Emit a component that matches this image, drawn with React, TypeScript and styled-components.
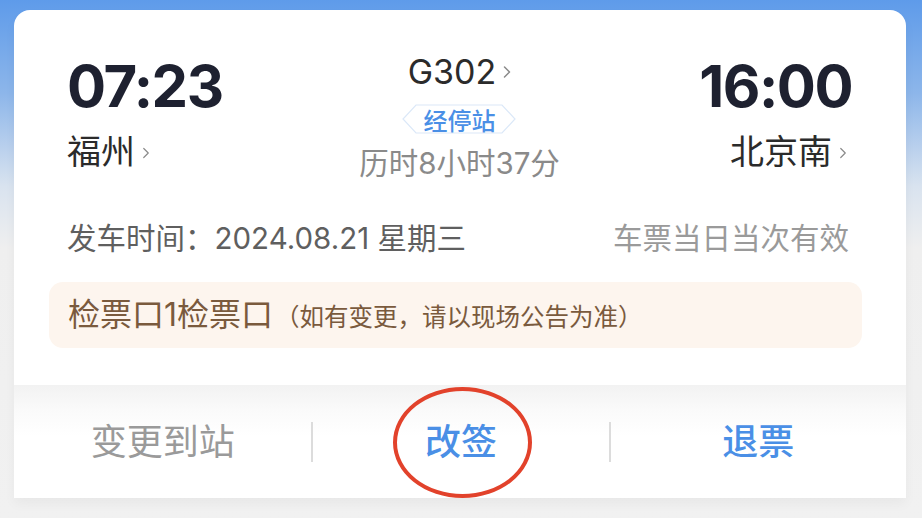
import React from 'react';
import styled, { createGlobalStyle } from 'styled-components';
import { ChevronRight } from 'lucide-react';

const GlobalStyle = createGlobalStyle`
  html, body {
    margin: 0;
    padding: 0;
  }
  body {
    font-family: Inter, "Noto Sans CJK SC", sans-serif;
    background: #f0f0f0;
  }
`;

const Page = styled.div`
  width: 922px;
  height: 518px;
  overflow: hidden;
  background: linear-gradient(180deg, #5e9bea 0%, #8db6ea 18%, #d9e3ef 36%, #efefef 48%, #f1f1f1 100%);
  padding: 10px 16px 0 14px;
  box-sizing: border-box;
`;

const Card = styled.div`
  background: #fff;
  border-radius: 16px 16px 0 0;
  overflow: hidden;
  box-shadow: 0 6px 12px rgba(0, 0, 0, 0.04);
`;

const Body = styled.div`
  padding: 44px 54px 39px 53px;
`;

const TopRow = styled.div`
  display: grid;
  grid-template-columns: 1fr auto 1fr;
  align-items: start;
`;

const End = styled.div<{ $right?: boolean }>`
  display: flex;
  flex-direction: column;
  align-items: ${(p) => (p.$right ? 'flex-end' : 'flex-start')};
`;

const Time = styled.div`
  font-size: 58px;
  font-weight: 700;
  line-height: 64px;
  color: #1e2130;
  letter-spacing: -1.5px;
`;

const Station = styled.div`
  display: flex;
  align-items: center;
  margin-top: 14px;
  font-size: 34px;
  line-height: 40px;
  color: #2b2b2b;
  svg {
    color: #8a8a8a;
    margin-left: 2px;
    margin-top: 2px;
  }
`;

const Middle = styled.div`
  display: flex;
  flex-direction: column;
  align-items: center;
  margin-top: -2px;
`;

const Train = styled.div`
  display: flex;
  align-items: center;
  margin-left: 6px;
  font-size: 34px;
  line-height: 40px;
  color: #2b2b2b;
  svg {
    color: #8a8a8a;
    margin-left: 1px;
  }
`;

const Badge = styled.div`
  position: relative;
  width: 114px;
  height: 30px;
  margin-top: 12px;
  display: flex;
  align-items: center;
  justify-content: center;
  font-size: 24px;
  font-weight: 500;
  color: #4a8fe6;
  svg {
    position: absolute;
    inset: 0;
  }
  span {
    position: relative;
  }
`;

const Duration = styled.div`
  margin-top: 11px;
  font-size: 29.5px;
  line-height: 36px;
  color: #8a8a8a;
`;

const InfoRow = styled.div`
  display: flex;
  justify-content: space-between;
  align-items: center;
  margin-top: 40px;
  font-size: 29.5px;
  line-height: 34px;
  color: #5f5f5f;
`;

const Hint = styled.span`
  color: #9a9a9a;
  margin-right: 3px;
`;

const Notice = styled.div`
  display: flex;
  align-items: baseline;
  margin: 27px -10px 0 -18px;
  padding: 14px 19px;
  border-radius: 14px;
  background: #fdf5ee;
  color: #7a5a3d;
`;

const Gate = styled.span`
  font-size: 32px;
  line-height: 38px;
`;

const GateNote = styled.span`
  font-size: 24.5px;
  margin-left: 2px;
`;

const Footer = styled.div`
  position: relative;
  display: grid;
  grid-template-columns: repeat(3, 1fr);
  align-items: center;
  height: 113px;
  margin-top: -2px;
  background: linear-gradient(180deg, #f2f2f2 0%, #fafafa 22%, #fff 45%);
`;

const Action = styled.div<{ $active?: boolean; $divider?: boolean }>`
  text-align: center;
  font-size: 36px;
  line-height: 40px;
  font-weight: ${(p) => (p.$active ? 500 : 400)};
  color: ${(p) => (p.$active ? '#4a8fe6' : '#9a9a9a')};
  border-left: ${(p) => (p.$divider ? '2px solid #dcdcdc' : 'none')};
`;

const Ring = styled.div`
  position: absolute;
  left: 379px;
  top: 2px;
  width: 131px;
  height: 103px;
  border: 4px solid #e2422b;
  border-radius: 50%;
  pointer-events: none;
`;

const BadgeShape = () => (
  <svg width="114" height="30" viewBox="0 0 114 30">
    <path
      d="M14 1 H100 L113 15 L100 29 H14 L1 15 Z"
      fill="#fff"
      stroke="#dbe8f8"
      strokeWidth="1.2"
    />
  </svg>
);

export default function App() {
  return (
    <>
      <GlobalStyle />
      <Page>
        <Card>
          <Body>
            <TopRow>
              <End>
                <Time>07:23</Time>
                <Station>
                  福州
                  <ChevronRight size={18} strokeWidth={1.6} />
                </Station>
              </End>
              <Middle>
                <Train>
                  G302
                  <ChevronRight size={20} strokeWidth={1.8} />
                </Train>
                <Badge>
                  <BadgeShape />
                  <span>经停站</span>
                </Badge>
                <Duration>历时8小时37分</Duration>
              </Middle>
              <End $right>
                <Time>16:00</Time>
                <Station>
                  北京南
                  <ChevronRight size={18} strokeWidth={1.6} />
                </Station>
              </End>
            </TopRow>
            <InfoRow>
              <span>发车时间：2024.08.21 星期三</span>
              <Hint>车票当日当次有效</Hint>
            </InfoRow>
            <Notice>
              <Gate>检票口1检票口</Gate>
              <GateNote>（如有变更，请以现场公告为准）</GateNote>
            </Notice>
          </Body>
          <Footer>
            <Action>变更到站</Action>
            <Action $active $divider>改签</Action>
            <Action $active $divider>退票</Action>
            <Ring />
          </Footer>
        </Card>
      </Page>
    </>
  );
}
